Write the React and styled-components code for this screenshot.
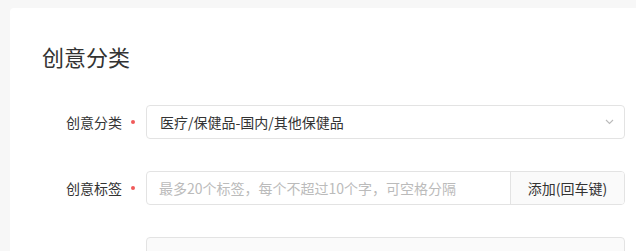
import React from "react";
import styled, { createGlobalStyle } from "styled-components";

const Global = createGlobalStyle`
  html, body { margin: 0; padding: 0; background: #f7f7f7; }
  body { font-family: "Noto Sans CJK SC", "Noto Sans", sans-serif; color: #333; overflow: hidden; }
`;

const Page = styled.div`
  padding: 8px 0 0 10px;
  height: 251px;
  box-sizing: border-box;
  overflow: hidden;
`;

const Card = styled.div`
  background: #fff;
  border-radius: 4px 0 0 0;
  padding: 33px 0 0 32px;
  height: 100%;
  box-sizing: border-box;
  overflow: hidden;
`;

const Title = styled.h2`
  margin: 0 0 34px;
  font-size: 22px;
  line-height: 30px;
  font-weight: 400;
  color: #333;
`;

const Row = styled.div`
  display: flex;
  align-items: center;
  margin-bottom: 32px;
`;

const Label = styled.div`
  width: 80px;
  text-align: right;
  font-size: 14px;
  color: #333;
`;

const Required = styled.span`
  width: 4px;
  height: 4px;
  border-radius: 50%;
  background: #f05a5a;
  margin: 0 11px 0 9px;
  flex: none;
`;

const Spacer = styled.span`
  width: 24px;
  flex: none;
`;

const Field = styled.div`
  width: 479px;
  height: 34px;
  flex: none;
  box-sizing: border-box;
  border: 1px solid #e3e3e3;
  border-radius: 4px;
  display: flex;
  align-items: center;
  background: ${(p) => (p.$muted ? "#fafafa" : "#fff")};
  font-size: 14px;
  overflow: hidden;
`;

const Value = styled.span`
  flex: 1;
  padding-left: 13px;
  color: #333;
`;

const Placeholder = styled.span`
  flex: 1;
  padding-left: 12px;
  color: #bbb;
`;

const Arrow = styled.span`
  width: 30px;
  display: flex;
  justify-content: center;
  color: #bbb;
`;

const AddButton = styled.div`
  width: 113px;
  height: 100%;
  border-left: 1px solid #e3e3e3;
  background: #fafafa;
  display: flex;
  align-items: center;
  justify-content: center;
  font-size: 14px;
  color: #333;
`;

export default function App() {
  return (
    <>
      <Global />
      <Page>
        <Card>
          <Title>创意分类</Title>
          <Row>
            <Label>创意分类</Label>
            <Required />
            <Field>
              <Value>医疗/保健品-国内/其他保健品</Value>
              <Arrow>
                <svg width="9" height="6" viewBox="0 0 9 6">
                  <path d="M1 1l3.5 3.5L8 1" fill="none" stroke="#bbb" strokeWidth="1.1" />
                </svg>
              </Arrow>
            </Field>
          </Row>
          <Row>
            <Label>创意标签</Label>
            <Required />
            <Field>
              <Placeholder>最多20个标签，每个不超过10个字，可空格分隔</Placeholder>
              <AddButton>添加(回车键)</AddButton>
            </Field>
          </Row>
          <Row>
            <Label />
            <Spacer />
            <Field $muted />
          </Row>
        </Card>
      </Page>
    </>
  );
}
